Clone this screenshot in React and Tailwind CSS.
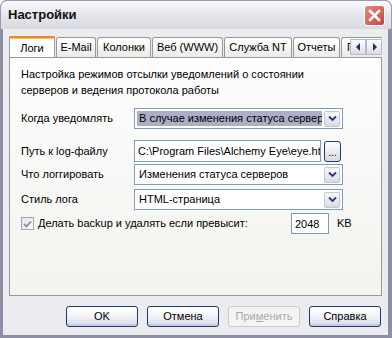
import React from "react";

const font = { fontFamily: '"Liberation Sans", Arial, sans-serif' };

function Chevron() {
  return (
    <svg width="9" height="7" viewBox="0 0 9 7">
      <path d="M1 1.5 L4.5 5 L8 1.5" fill="none" stroke="#2a3a6e" strokeWidth="1.8" />
    </svg>
  );
}

function Select({ value, selected }) {
  return (
    <div className="w-[209px] h-[21px] border border-[#7f9db9] bg-white flex items-center p-[2px]">
      <div
        className={
          "flex-1 h-full flex items-center pl-[2px] overflow-hidden whitespace-nowrap " +
          (selected ? "bg-[#adafc6]" : "")
        }
      >
        {value}
      </div>
      <div className="w-[16px] h-[16px] ml-[2px] rounded-[2px] border border-[#c3c7d3] bg-gradient-to-b from-[#fafafc] to-[#d9dae3] flex items-center justify-center">
        <Chevron />
      </div>
    </div>
  );
}

function Tab({ label, w, active }) {
  if (active) {
    return (
      <div
        className={`${w} h-[22px] shrink-0 relative z-10 -mb-px bg-white border-x border-[#919b9c] rounded-t-[3px] flex flex-col`}
      >
        <div className="h-[2px] bg-[#e68b2c] rounded-t-[2px] -mx-px" />
        <div className="h-px bg-[#ffc73c]" />
        <div className="flex-1 flex items-center justify-center">{label}</div>
      </div>
    );
  }
  return (
    <div
      className={`${w} h-[20px] shrink-0 border border-b-0 border-[#919b9c] rounded-t-[3px] bg-gradient-to-b from-white to-[#ecebe6] flex items-center justify-center whitespace-nowrap overflow-hidden`}
    >
      {label}
    </div>
  );
}

function Btn({ children, disabled }) {
  return (
    <div
      className={
        "w-[72px] h-[21px] rounded-[3px] border flex items-center justify-center " +
        (disabled
          ? "border-[#c9c9d0] text-[#a8a8b4] bg-[#f4f4f2]"
          : "border-[#1c3b6e] bg-gradient-to-b from-white via-[#f2f2f6] to-[#d6d8e4] shadow-[inset_0_-2px_0_#c6cbe0]")
      }
    >
      {children}
    </div>
  );
}

export default function App() {
  return (
    <div
      className="w-[392px] h-[338px] flex flex-col bg-[#8e8ea4] rounded-t-[7px] overflow-hidden text-[11px] text-black"
      style={font}
    >
      {/* title bar */}
      <div className="h-[29px] shrink-0 flex items-center pl-[7px] pr-[6px] border-t border-x border-[#9a9ab0] rounded-t-[7px] bg-gradient-to-b from-[#fbfbfd] via-[#e6e6ec] to-[#d9d9e1]">
        <div className="flex-1 font-bold text-[13px] text-[#111]">Настройки</div>
        <div className="w-[21px] h-[21px] rounded-[3px] border border-white bg-gradient-to-br from-[#e58a82] to-[#c4463d] flex items-center justify-center">
          <svg width="13" height="13" viewBox="0 0 13 13">
            <path d="M2 2 L11 11 M11 2 L2 11" stroke="white" strokeWidth="2.6" strokeLinecap="square" />
          </svg>
        </div>
      </div>

      {/* body */}
      <div className="flex-1 ml-[3px] mr-[4px] mb-[3px] bg-[#ecebf0] flex flex-col pl-[6px] pr-[6px] pt-[6px]">
        {/* tab strip */}
        <div className="h-[22px] flex items-end relative">
          <div className="flex items-end gap-px flex-1 overflow-hidden">
            <Tab label="Логи" w="w-[46px]" active />
            <Tab label="E-Mail" w="w-[40px]" />
            <Tab label="Колонки" w="w-[54px]" />
            <Tab label="Веб (WWW)" w="w-[71px]" />
            <Tab label="Служба NT" w="w-[68px]" />
            <Tab label="Отчеты" w="w-[47px]" />
            <Tab label="Прочее" w="w-[50px]" />
          </div>
          <div className="absolute right-0 top-[4px] flex">
            <div className="w-[16px] h-[16px] border border-[#b7bac6] bg-gradient-to-b from-white to-[#dcdde5] flex items-center justify-center">
              <svg width="5" height="8" viewBox="0 0 5 8"><path d="M4 0 L0 4 L4 8 Z" fill="#1e2e66" /></svg>
            </div>
            <div className="w-[16px] h-[16px] border border-[#b7bac6] bg-gradient-to-b from-white to-[#dcdde5] flex items-center justify-center">
              <svg width="5" height="8" viewBox="0 0 5 8"><path d="M1 0 L5 4 L1 8 Z" fill="#1e2e66" /></svg>
            </div>
          </div>
        </div>

        {/* tab panel */}
        <div className="h-[239px] border border-[#919b9c] bg-gradient-to-b from-[#fdfdfd] to-[#f3f3ef] pl-[11px] pt-[8px]">
          <div className="leading-[16px]">
            Настройка режимов отсылки уведомлений о состоянии
            <br />
            серверов и ведения протокола работы
          </div>

          <div className="flex items-center mt-[10px] h-[21px]">
            <div className="w-[113px]">Когда уведомлять</div>
            <Select value="В случае изменения статуса серверов" selected />
          </div>

          <div className="flex items-center mt-[11px] h-[22px]">
            <div className="w-[113px]">Путь к log-файлу</div>
            <div className="w-[187px] h-[22px] border border-[#7f9db9] bg-white flex items-center pl-[3px] overflow-hidden whitespace-nowrap">
              C:\Program Files\Alchemy Eye\eye.ht
            </div>
            <div className="w-[17px] h-[21px] ml-[3px] rounded-[3px] border border-[#1c3b6e] bg-gradient-to-b from-white to-[#d6d8e4] flex items-end justify-center pb-[3px] text-[10px] leading-none">
              ...
            </div>
          </div>

          <div className="flex items-center mt-[2px] h-[21px]">
            <div className="w-[113px]">Что логгировать</div>
            <Select value="Изменения статуса серверов" />
          </div>

          <div className="flex items-center mt-[4px] h-[21px]">
            <div className="w-[113px]">Стиль лога</div>
            <Select value="HTML-страница" />
          </div>

          <div className="flex items-center mt-[3px] h-[21px]">
            <div className="w-[13px] h-[13px] border border-[#a4a6b8] bg-gradient-to-br from-[#e4e4ea] to-[#fafafa] flex items-center justify-center">
              <svg width="9" height="8" viewBox="0 0 9 8">
                <path d="M1 4 L3.5 6.5 L8 1.5" fill="none" stroke="#8a8ca4" strokeWidth="1.8" />
              </svg>
            </div>
            <div className="ml-[4px] w-[253px]">Делать backup и удалять если превысит:</div>
            <div className="w-[38px] h-[21px] border border-[#7f9db9] bg-white pl-[3px] pt-[2px]">2048</div>
            <div className="ml-[8px]">KB</div>
          </div>
        </div>

        {/* buttons */}
        <div className="flex justify-end gap-[9px] mt-[10px] pr-px">
          <Btn>OK</Btn>
          <Btn>Отмена</Btn>
          <Btn disabled>
            <span>
              При<span className="underline">м</span>енить
            </span>
          </Btn>
          <Btn>Справка</Btn>
        </div>
      </div>
    </div>
  );
}
